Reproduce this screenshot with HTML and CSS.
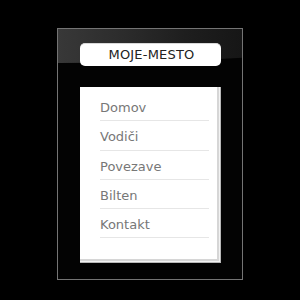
FILE: index.html
```html
<!DOCTYPE html>
<html>
<head>
<meta charset="utf-8">
<link rel="stylesheet" href="styles.css">
</head>
<body>
<div class="frame">
  <div class="title">MOJE-MESTO</div>
  <div class="panel">
    <ul class="menu">
      <li>Domov</li>
      <li>Vodiči</li>
      <li>Povezave</li>
      <li>Bilten</li>
      <li>Kontakt</li>
    </ul>
  </div>
</div>
</body>
</html>
```
FILE: styles.css
```css
html, body {
  margin: 0;
  padding: 0;
  background: #000;
  width: 300px;
  height: 300px;
  overflow: hidden;
}
body {
  font-family: "DejaVu Sans", "Liberation Sans", sans-serif;
}
.frame {
  position: relative;
  overflow: hidden;
  box-sizing: border-box;
  width: 186px;
  height: 252px;
  margin: 28px 0 0 57px;
  border: 1px solid #747474;
  background: #030303;
  padding: 14px 20px 0 22px;
  display: flex;
  flex-direction: column;
  gap: 21px;
}
.frame::before {
  content: "";
  position: absolute;
  left: -800px;
  top: -366px;
  width: 1600px;
  height: 400px;
  border-radius: 50%;
  background: linear-gradient(to right, #383838 50%, #2c2c2c 54%, #1e1e1e 58%, #161616 61.5%);
}
.title {
  position: relative;
  height: 23px;
  width: 141px;
  box-sizing: border-box;
  background: #fff;
  border-radius: 5px;
  border-top: 1px solid #d8d8d8;
  color: #222;
  font-size: 13px;
  letter-spacing: 0.2px;
  line-height: 21px;
  text-align: center;
  padding-left: 2px;
}
.panel {
  position: relative;
  width: 141px;
  height: 176px;
  box-sizing: border-box;
  background: #fff;
  border-right: 1px solid #b8b8b8;
  border-bottom: 1px solid #b8b8b8;
  box-shadow: inset -1px -1px 0 #f2f2f2, inset -3px -3px 0 #d6d6d6;
  padding: 5px 11px 0 20px;
}
.menu {
  list-style: none;
  margin: 0;
  padding: 0;
}
.menu li {
  font-size: 13px;
  line-height: 15px;
  color: #777;
  padding: 8px 0 5.25px 0;
  border-bottom: 1px solid #e6e6e6;
  height: 15px;
}
```
